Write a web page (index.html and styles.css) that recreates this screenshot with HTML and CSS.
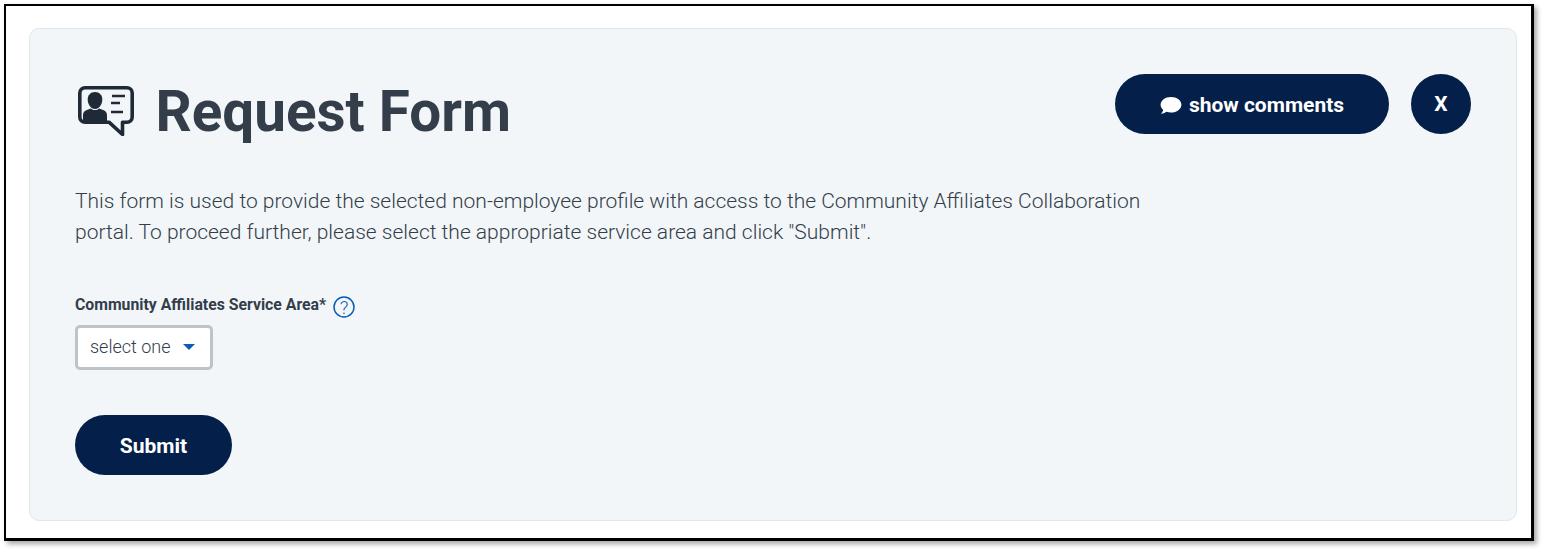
FILE: index.html
```
<!DOCTYPE html>
<html lang="en">
<head>
<meta charset="utf-8">
<title>Request Form</title>
<link rel="stylesheet" href="styles.css">
</head>
<body>
<div class="frame">
  <main class="card">
    <header class="head">
      <div class="title-wrap">
        <svg class="title-icon" viewBox="0 0 56 50" aria-hidden="true">
          <path d="M7 1.800H49a5.200 5.200 0 0 1 5.200 5.200V31a5.200 5.200 0 0 1-5.200 5.200H44.500V48.500L31 36.200H7A5.200 5.200 0 0 1 1.800 31V7A5.200 5.200 0 0 1 7 1.800Z" fill="none" stroke="#1f2a36" stroke-width="3.600" stroke-linejoin="round"/>
          <path d="M17 6c4.500 0 7.300 3.200 7.300 7.500 0 4.700-3 9.500-7.300 9.500s-7.300-4.800-7.300-9.500C9.700 9.200 12.500 6 17 6Z" fill="#1f2a36"/>
          <path d="M5 36V29c0-3 2-4.500 4.500-5.300L13 22.500c1 1 2.500 1.500 4 1.500s3-.5 4-1.500l3.500 1.200C27 24.500 29 26 29 29v7Z" fill="#1f2a36"/>
          <path d="M34 10H47M33 17H42M33 26H45" fill="none" stroke="#1f2a36" stroke-width="2.600"/>
        </svg>
        <h1 class="title">Request Form</h1>
      </div>
      <div class="actions">
        <button class="btn btn-comments" type="button">
          <svg class="comment-icon" viewBox="0 0 22 19" aria-hidden="true">
            <path d="M11 1C5.200 1 .6 4.500.6 8.800c0 2 1 3.700 2.600 5.100-.3 1.400-1.100 2.700-2.300 3.900 2.100-.2 4-1 5.500-2.100 1.400.5 3 .8 4.600.8 5.800 0 10.400-3.500 10.400-7.800S16.800 1 11 1Z" fill="#fff"/>
          </svg>
          show comments
        </button>
        <button class="btn btn-close" type="button">X</button>
      </div>
    </header>
    <p class="intro">This form is used to provide the selected non-employee profile with access to the Community Affiliates Collaboration portal. To proceed further, please select the appropriate service area and click "Submit".</p>
    <div class="field">
      <div class="label-row">
        <label class="label">Community Affiliates Service Area*</label>
        <svg class="help" viewBox="0 0 22 22" aria-hidden="true">
          <circle cx="11" cy="11" r="10" fill="none" stroke="#0b5cb5" stroke-width="1.500"/>
          <text class="help-mark" x="11" y="17.500" text-anchor="middle">?</text>
        </svg>
      </div>
      <div class="select">
        <span>select one</span>
        <span class="caret"></span>
      </div>
    </div>
    <button class="btn btn-submit" type="button">Submit</button>
  </main>
</div>
</body>
</html>
```
FILE: styles.css
```
* { box-sizing: border-box; }
html, body { margin: 0; height: 554px; background: #fff; overflow: hidden; }
body { padding: 4px 0 0 4px; font-family: Roboto, "Liberation Sans", sans-serif; }
.frame {
  width: 1530px;
  height: 537px;
  border: 3px solid #000;
  border-width: 2.500px 3px 3px 2.500px;
  background: #fff;
  padding: 21.500px 14px 17px 22.500px;
  box-shadow: 3px 3px 5px rgba(0, 0, 0, 0.35);
}
.card {
  height: 100%;
  background: #f2f6f9;
  border: 1px solid #e2e7ec;
  border-radius: 10px;
  padding: 45px 45px 0 45.500px;
}
.head { display: flex; justify-content: space-between; align-items: flex-start; }
.title-wrap { display: flex; align-items: center; gap: 22px; margin-left: 2.500px; }
.title-icon { width: 56px; height: 50px; flex: none; margin-top: -1px; }
.title { margin: 1px 0 0; font-size: 56.600px; line-height: 74px; font-weight: 700; color: #333e4a; }
.actions { display: flex; gap: 22px; }
.btn { border: 0; background: #04204a; color: #fff; font-family: inherit; font-weight: 700; font-size: 21px; height: 60px; border-radius: 30px; padding: 2px 0 0; }
.btn-comments { width: 274px; display: flex; align-items: center; justify-content: center; gap: 7px; }
.comment-icon { width: 22px; height: 19px; flex: none; margin-top: 2px; }
.btn-close { width: 60px; padding: 0; }
.intro { margin: 37px 0 0; width: 1090px; font-size: 21px; line-height: 31px; font-weight: 300; color: #333e4a; }
.field { margin-top: 43px; }
.label-row { display: flex; align-items: center; gap: 7px; height: 28px; }
.label { font-size: 15.800px; font-weight: 700; color: #333e4a; }
.help { width: 22px; height: 22px; margin-top: 4px; }
.help-mark { font: 300 19px Roboto, sans-serif; fill: #0b5cb5; }
.select { margin-top: 6px; width: 138px; height: 45px; border: 3px solid #bcc4cb; border-radius: 5px; background: #fff; display: flex; align-items: center; justify-content: space-between; padding: 0 15px 2px 12px; font-size: 18px; font-weight: 300; color: #333e4a; }
.caret { width: 0; height: 0; border-left: 6px solid transparent; border-right: 6px solid transparent; border-top: 6px solid #0b5cb5; margin-top: 2px; }
.btn-submit { display: block; margin-top: 45px; width: 157px; }
```
